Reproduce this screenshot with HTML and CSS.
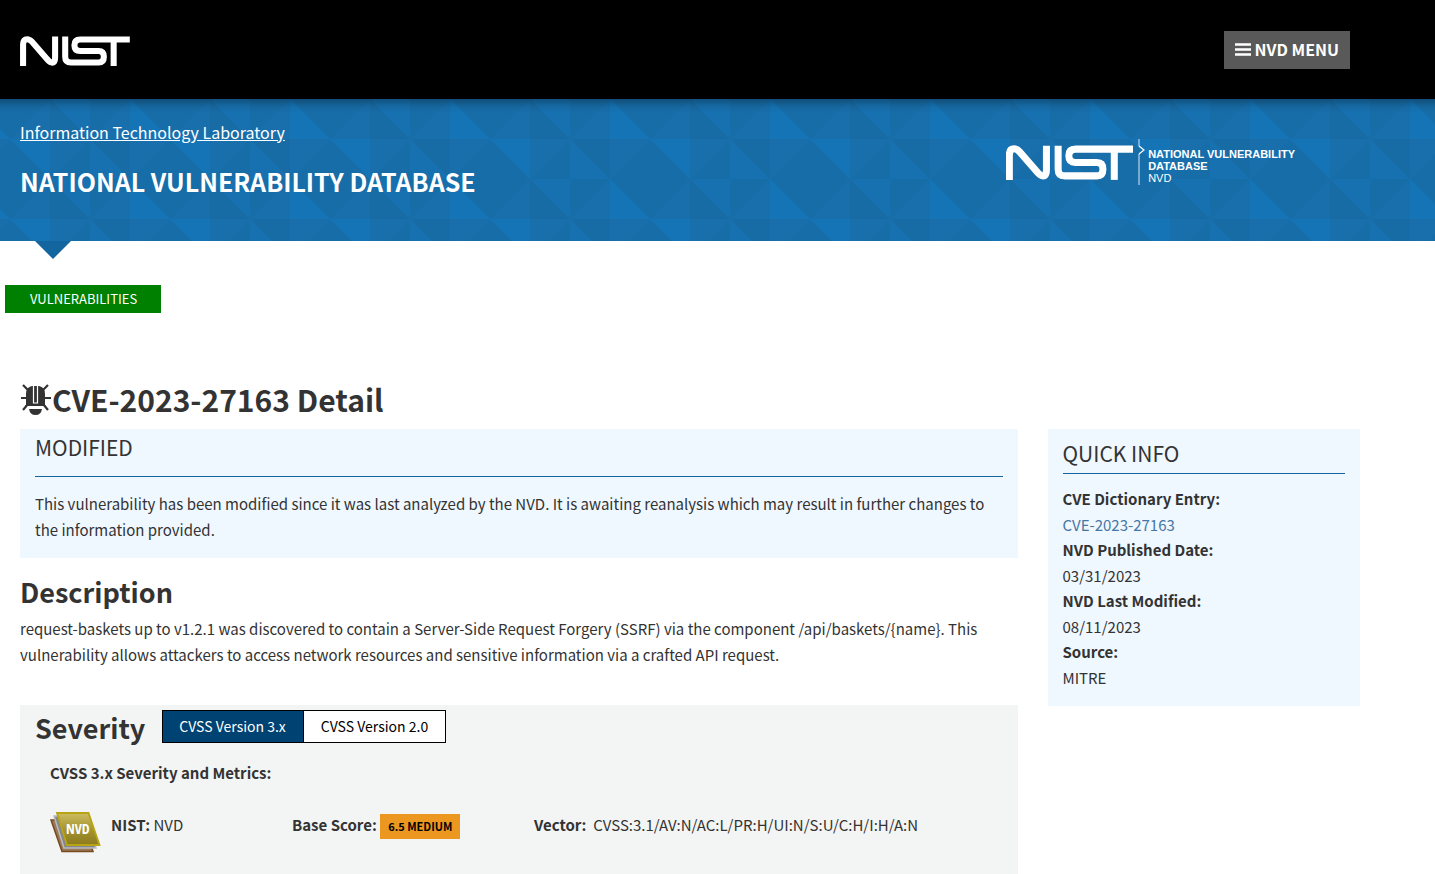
FILE: index.html
```html
<!DOCTYPE html>
<html lang="en">
<head>
<meta charset="utf-8">
<title>NVD - CVE-2023-27163</title>
<link rel="stylesheet" href="styles.css">
</head>
<body>
<svg class="defs" width="0" height="0" aria-hidden="true">
  <symbol id="nist" viewBox="0 -2 380 104">
    <g fill="none" stroke="#fff" stroke-width="21">
      <path d="M10 102V28Q10 9 24 9Q33 9 41 18L92 77Q106 94 116 89Q121 86 121 72V0"/>
      <path d="M156 0V70Q156 90 176 90H272Q290 90 290 70Q290 50 272 50H208Q188 50 188 30Q188 10 208 10H380"/>
      <path d="M324 10V102"/>
    </g>
  </symbol>
</svg>
<header class="topbar">
  <div class="container topbar-inner">
    <a class="brand" href="#" aria-label="NIST"><svg width="110" height="30"><use href="#nist"/></svg></a>
    <button class="menu" type="button">
      <svg width="16" height="14" viewBox="0 0 16 14" aria-hidden="true"><path d="M0 2.500H16M0 7.500H16M0 12.500H16" stroke="#fff" stroke-width="2.500"/></svg>
      <span>NVD MENU</span>
    </button>
  </div>
</header>
<section class="banner">
  <div class="container banner-inner">
    <div>
      <a class="lab" href="#">Information Technology Laboratory</a>
      <h2 class="site-title">NATIONAL VULNERABILITY DATABASE</h2>
    </div>
    <a class="nvd-logo" href="#">
      <svg class="nvd-mark" width="127" height="35"><use href="#nist"/></svg>
      <svg class="nvd-rule" width="8" height="46" viewBox="0 0 8 46" aria-hidden="true"><path d="M1 0V7M1 15V46" stroke="#8fbbdc" stroke-width="1.6"/><path d="M1 7L6 11L1 15" fill="none" stroke="#fff" stroke-width="1.2"/></svg>
      <span class="nvd-name"><b>NATIONAL VULNERABILITY<br>DATABASE</b><br>NVD</span>
    </a>
  </div>
</section>
<main class="container">
  <a class="tag" href="#">VULNERABILITIES</a>
  <h1 class="cve">
    <svg width="32" height="33" viewBox="0 0 32 33" aria-hidden="true">
      <g fill="#333">
        <path d="M6 22V11Q6 4 12 3H19Q25 4 25 11V22L26 23H5Z"/>
        <path d="M9 26H22Q21 32 15.500 32Q10 32 9 26Z"/>
      </g>
      <path d="M3 2L9 8M28 2L22 8M1 15H7M24 15H31M3 27L8 21M28 27L23 21" stroke="#333" stroke-width="2.200" fill="none"/>
      <path d="M13.500 3V20H17.500V3" stroke="#fff" stroke-width="1.200" fill="none"/>
    </svg><span>CVE-2023-27163 Detail</span>
  </h1>
  <div class="columns">
    <div class="main-col">
      <section class="notice">
        <h3 class="panel-title">MODIFIED</h3>
        <p>This vulnerability has been modified since it was last analyzed by the NVD. It is awaiting reanalysis which may result in further changes to the information provided.</p>
      </section>
      <h2 class="heading">Description</h2>
      <p class="description">request-baskets up to v1.2.1 was discovered to contain a Server-Side Request Forgery (SSRF) via the component /api/baskets/{name}. This vulnerability allows attackers to access network resources and sensitive information via a crafted API request.</p>
      <section class="severity">
        <div class="severity-head">
          <h2 class="heading">Severity</h2>
          <div class="versions">
            <button class="version active" type="button">CVSS Version 3.x</button>
            <button class="version" type="button">CVSS Version 2.0</button>
          </div>
        </div>
        <div class="metrics">
          <strong>CVSS 3.x Severity and Metrics:</strong>
          <div class="score-row">
            <div class="score-source">
              <svg width="51" height="41" viewBox="0 0 51 41" aria-hidden="true">
                <defs><linearGradient id="gold" x1="0" y1="0" x2="0" y2="1"><stop offset="0" stop-color="#cdbd62"/><stop offset=".5" stop-color="#a6952f"/><stop offset="1" stop-color="#8c7a1e"/></linearGradient></defs>
                <path d="M1 8L12 39.500H43L33 8Z" fill="#9a7858" stroke="#764a1c" stroke-width="1.500"/>
                <path d="M4 4L14 36H46L37 4Z" fill="#85878a" stroke="#b9bcc0" stroke-width="1.500"/>
                <path d="M7 1H38.500L49.500 33H17Z" fill="url(#gold)" stroke="#b8a414" stroke-width="1.800"/>
                <text class="book-label" x="16" y="22">NVD</text>
              </svg>
              <span><strong>NIST:</strong> NVD</span>
            </div>
            <div class="score-base"><strong>Base Score:</strong> <a class="score" href="#">6.5 MEDIUM</a></div>
            <div class="score-vector"><strong>Vector:</strong>&nbsp; CVSS:3.1/AV:N/AC:L/PR:H/UI:N/S:U/C:H/I:H/A:N</div>
          </div>
        </div>
      </section>
    </div>
    <aside class="side-col">
      <section class="quick">
        <h3 class="panel-title">QUICK INFO</h3>
        <dl>
          <dt>CVE Dictionary Entry:</dt><dd><a href="#">CVE-2023-27163</a></dd>
          <dt>NVD Published Date:</dt><dd>03/31/2023</dd>
          <dt>NVD Last Modified:</dt><dd>08/11/2023</dd>
          <dt>Source:</dt><dd>MITRE</dd>
        </dl>
      </section>
    </aside>
  </div>
</main>
</body>
</html>
```
FILE: styles.css
```css
* { box-sizing: border-box; }
body {
  margin: 0;
  background: #fff;
  color: #333;
  font: 15px/1.7 "Noto Sans CJK SC", "Open Sans", sans-serif;
}
h1, h2, h3, p, dl, dd { margin: 0; }
.defs { position: absolute; }
.container { max-width: 1370px; margin-left: 5px; padding: 0 15px; }

.topbar { background: #000; }
.topbar-inner { display: flex; justify-content: space-between; padding: 31px 25px 30px 15px; }
.brand { padding-top: 5px; }
.brand svg { display: block; }
.menu {
  display: flex;
  align-items: center;
  gap: 4px;
  height: 38px;
  padding: 0 11px 2px;
  border: 0;
  background: #595959;
  color: #fff;
  font: bold 16px/24px "Noto Sans CJK SC", sans-serif;
}

.banner {
  position: relative;
  background:
    linear-gradient(rgba(0, 0, 0, .28), rgba(0, 0, 0, .06) 8px, transparent 14px),
    url("data:image/svg+xml,%3Csvg xmlns='http://www.w3.org/2000/svg' width='160' height='80'%3E%3Cpath fill='%23176da8' d='M0 0h160v80H0z'/%3E%3Cpath fill='%23186fac' d='M40 0v40H0zM120 0v40H80zM80 40L40 80V40zM160 40L120 80V40z'/%3E%3Cpath fill='%231771b0' d='M40 0h40v40zM80 40l40 40H80z'/%3E%3Cpath fill='%231574b5' d='M120 0l40 40h-40zM0 40h40v40z'/%3E%3Cpath fill='%23176ca6' d='M40 0l40 40H40zM80 40h40v40z'/%3E%3C/svg%3E") 10px 0;
}
.banner::after {
  content: "";
  position: absolute;
  top: 100%;
  left: 35px;
  border: 18px solid transparent;
  border-top-color: #12659f;
  border-bottom: 0;
}
.banner-inner { display: flex; justify-content: space-between; min-height: 142px; padding-right: 75px; }
.lab { display: block; margin-top: 20px; color: #fff; font-size: 16px; line-height: 26px; }
.site-title { margin-top: 18px; color: #fff; font-size: 25px; line-height: 36px; }
.nvd-logo { display: flex; padding: 40px 5px 0 0; color: #fff; text-decoration: none; }
.nvd-mark { margin: 6px 5px 0 0; }
.nvd-rule { margin-right: 2px; }
.nvd-name { padding-top: 9px; font: 11px/12px "Liberation Sans", Arial, sans-serif; }

.tag {
  display: inline-block;
  margin: 44px 0 0 -15px;
  padding: 0 24px 0 25px;
  background: #008000;
  color: #fff;
  font-size: 13px;
  line-height: 28px;
  text-decoration: none;
}
.cve { display: flex; align-items: center; margin-top: 64px; font-size: 30px; line-height: 44px; }
.columns { display: flex; margin: 8px -15px 0; }
.main-col { width: 75%; padding: 0 15px; }
.side-col { width: 25%; padding: 0 15px; }
.notice, .quick { padding: 0 15px; background: #eff7ff; }
.notice { padding-bottom: 16px; }
.panel-title { border-bottom: 1px solid #12659f; font-size: 21px; font-weight: 400; line-height: 36px; }
.notice .panel-title { margin-bottom: 14px; padding-bottom: 11px; }
.quick .panel-title { margin-bottom: 12px; padding: 6px 0 2px; }
.quick { padding-bottom: 16px; }
.heading { font-size: 27px; line-height: 36px; }
.description { margin-top: 6px; }
.main-col > .heading { margin-top: 16px; }
.severity { margin-top: 38px; padding: 5px 15px 30px; background: #f3f5f4; }
.severity-head { display: flex; gap: 17px; }
.versions { display: flex; height: 33px; border: 1px solid #000; }
.version {
  padding: 0 17px;
  border: 0;
  background: #fff;
  color: #000;
  font: 14px/31px "Noto Sans CJK SC", sans-serif;
}
.version.active { border-right: 1px solid #000; padding-left: 16px; background: #004272; color: #fff; }
.metrics { padding: 14px 15px 0; }
.score-row { display: flex; margin-top: 26px; }
.score-source { display: flex; gap: 10px; width: 242px; }
.score-base { width: 242px; }
.score {
  display: inline-block;
  padding: 0 8px;
  background: #ec971f;
  color: #000;
  font-size: 11px;
  font-weight: bold;
  line-height: 25px;
  text-decoration: none;
  vertical-align: middle;
}
.book-label { fill: #fff; font: bold 14px "Liberation Sans Narrow", "Open Sans Condensed", "DejaVu Sans Condensed", sans-serif; }
dt { font-weight: bold; }
.quick a { color: #4676a4; text-decoration: none; }
```
